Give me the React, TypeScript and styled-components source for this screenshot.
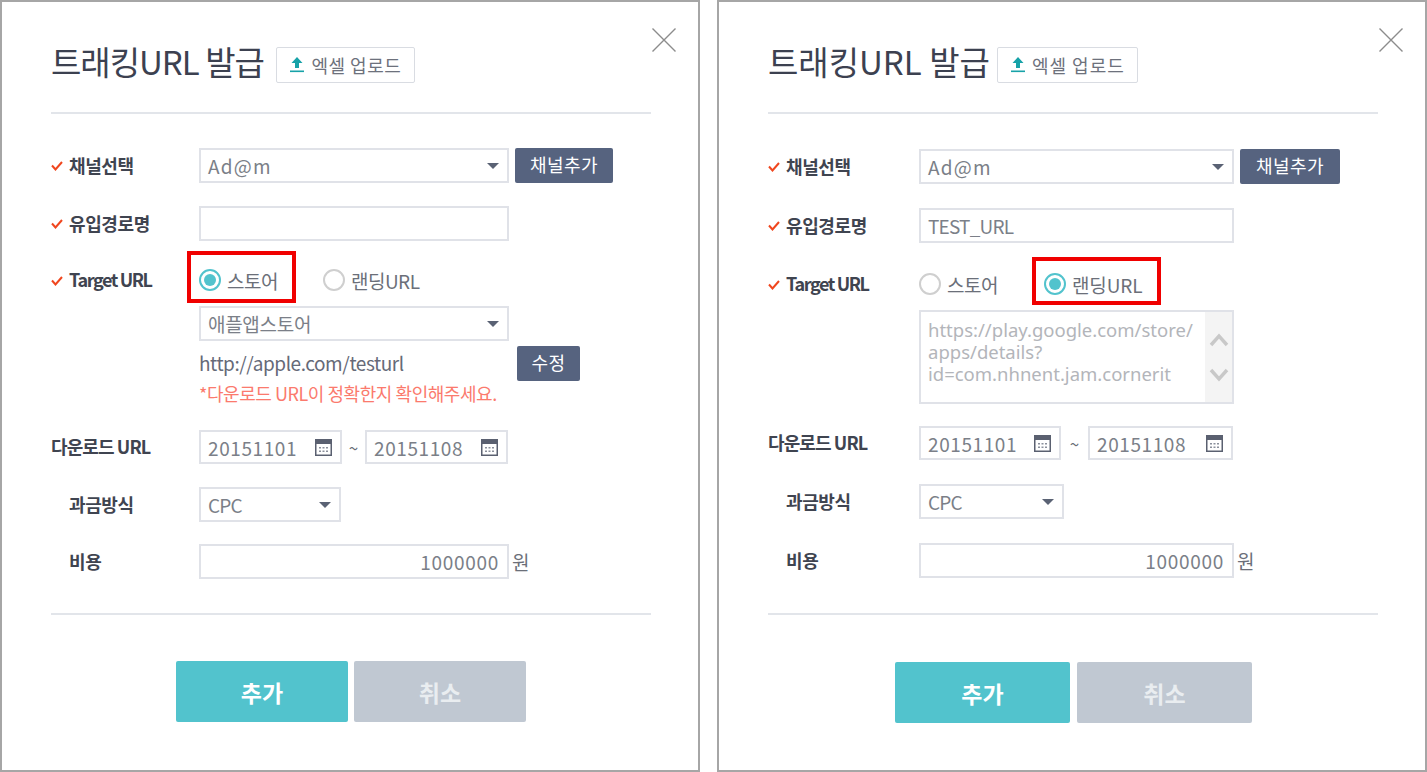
import React from "react";
import styled, { createGlobalStyle } from "styled-components";

const GlobalStyle = createGlobalStyle`
  html, body {
    margin: 0;
    padding: 0;
    background: #fff;
    font-family: "Noto Sans CJK KR", "Noto Sans", sans-serif;
  }
  * { box-sizing: border-box; }
`;

const Page = styled.div`
  width: 1427px;
  height: 772px;
  display: flex;
  justify-content: space-between;
  overflow: hidden;
`;

const Panel = styled.section<{ $width: number }>`
  position: relative;
  width: ${(p) => p.$width}px;
  height: 772px;
  border: 2px solid #a6a6a6;
  padding: 45px 0 0 49px;
`;

const CloseButton = styled.div<{ $right: number }>`
  position: absolute;
  top: 26px;
  right: ${(p) => p.$right}px;
  width: 24px;
  height: 24px;
  color: #8c8c8c;
`;

const Header = styled.div`
  display: flex;
  align-items: center;
  height: 35px;
`;

const Title = styled.h1<{ $track: number }>`
  margin: -6px 0 0;
  font-size: 33px;
  font-weight: 400;
  letter-spacing: ${(p) => p.$track}px;
  color: #3c4150;
  line-height: 35px;
`;

const UploadButton = styled.div<{ $left: number; $width: number; $track: number }>`
  margin-left: ${(p) => p.$left}px;
  width: ${(p) => p.$width}px;
  height: 36px;
  border: 1px solid #d9dce2;
  border-radius: 2px;
  display: flex;
  align-items: center;
  justify-content: center;
  gap: 6px;
  font-size: 18px;
  letter-spacing: ${(p) => p.$track}px;
  color: #6d717c;
`;

const Divider = styled.hr<{ $top: number; $width: number }>`
  margin: ${(p) => p.$top}px 0 0;
  width: ${(p) => p.$width}px;
  height: 2px;
  border: 0;
  background: #e2e5ea;
`;

const Row = styled.div<{ $top: number; $align?: string }>`
  display: flex;
  align-items: ${(p) => p.$align || "center"};
  margin-top: ${(p) => p.$top}px;
`;

const Label = styled.div<{ $width: number; $plain?: boolean; $track?: number }>`
  width: ${(p) => p.$width}px;
  flex: none;
  display: flex;
  align-items: center;
  gap: 6px;
  padding-left: ${(p) => (p.$plain ? "18px" : "0")};
  padding-bottom: 2px;
  font-size: 18px;
  font-weight: 700;
  letter-spacing: ${(p) => p.$track ?? -0.4}px;
  color: #3f4450;
`;

const Check = styled.svg`
  width: 12px;
  height: 10px;
  flex: none;
  margin-top: 3px;
  fill: none;
  stroke: #f0461e;
  stroke-width: 2;
`;

const Box = styled.div<{ $width: number; $height?: number; $right?: boolean; $track?: number }>`
  width: ${(p) => p.$width}px;
  height: ${(p) => p.$height || 35}px;
  flex: none;
  border: 2px solid #e0e2e8;
  display: flex;
  align-items: center;
  justify-content: ${(p) => (p.$right ? "flex-end" : "space-between")};
  padding: 0 8px 0 7px;
  font-size: 19px;
  letter-spacing: ${(p) => p.$track ?? -0.3}px;
  color: #7b7f88;
  background: #fff;
`;

const Caret = styled.span`
  width: 0;
  height: 0;
  border-left: 6px solid transparent;
  border-right: 6px solid transparent;
  border-top: 6px solid #5a6274;
`;

const DarkButton = styled.div<{ $width: number; $left: number }>`
  width: ${(p) => p.$width}px;
  height: 35px;
  margin-left: ${(p) => p.$left}px;
  padding-bottom: 3px;
  flex: none;
  background: #56637f;
  border-radius: 2px;
  display: flex;
  align-items: center;
  justify-content: center;
  color: #fff;
  font-size: 18px;
  letter-spacing: 0.5px;
`;

const Column = styled.div`
  display: flex;
  flex-direction: column;
`;

const RadioGroup = styled.div<{ $gap: number }>`
  display: flex;
  align-items: center;
  gap: ${(p) => p.$gap}px;
`;

const RadioOption = styled.div<{ $marked?: boolean; $up?: number; $down?: number; $track?: number }>`
  position: relative;
  display: flex;
  align-items: center;
  gap: 6px;
  font-size: 19px;
  letter-spacing: ${(p) => p.$track ?? -0.5}px;
  color: #6b6f79;
  &::after {
    content: "";
    display: ${(p) => (p.$marked ? "block" : "none")};
    position: absolute;
    top: -${(p) => p.$up || 14}px;
    bottom: -${(p) => p.$down || 7}px;
    left: -12px;
    right: -18px;
    border: 4px solid #f00000;
  }
`;

const RadioDot = styled.span<{ $on?: boolean }>`
  width: 22px;
  height: 22px;
  flex: none;
  border-radius: 50%;
  border: 2px solid ${(p) => (p.$on ? "#52c3cd" : "#cfcfcf")};
  padding: 3px;
  background-clip: content-box;
  background-color: ${(p) => (p.$on ? "#52c3cd" : "#fff")};
`;

const UrlRow = styled.div<{ $top: number }>`
  display: flex;
  align-items: center;
  margin-top: ${(p) => p.$top}px;
`;

const UrlText = styled.div`
  width: 318px;
  padding-bottom: 2px;
  font-size: 19px;
  letter-spacing: -0.45px;
  color: #666a78;
`;

const Warning = styled.div`
  font-size: 18px;
  line-height: 25px;
  letter-spacing: -0.45px;
  color: #fb7a6d;
`;

const TextArea = styled.div<{ $width: number; $height: number; $top: number }>`
  width: ${(p) => p.$width}px;
  height: ${(p) => p.$height}px;
  margin-top: ${(p) => p.$top}px;
  border: 2px solid #e0e2e8;
  display: flex;
  justify-content: space-between;
`;

const AreaText = styled.div`
  padding: 7px 0 0 7px;
  font-size: 18.5px;
  line-height: 22px;
  color: #b3b5ba;
  font-family: "Noto Sans", sans-serif;
`;

const ScrollTrack = styled.div`
  width: 27px;
  flex: none;
  background: #f4f4f4;
  color: #c8c8c8;
  display: flex;
  flex-direction: column;
  align-items: center;
  gap: 21px;
  padding-top: 21px;
`;

const Tilde = styled.span<{ $width: number }>`
  width: ${(p) => p.$width}px;
  text-align: center;
  font-size: 17px;
  color: #6b6f79;
  flex: none;
`;

const Won = styled.span`
  margin-left: 3px;
  font-size: 19px;
  color: #6b6f79;
`;

const Actions = styled.div<{ $left: number; $gap: number; $top: number }>`
  display: flex;
  gap: ${(p) => p.$gap}px;
  margin: ${(p) => p.$top}px 0 0 ${(p) => p.$left}px;
`;

const ActionButton = styled.div<{ $width: number; $muted?: boolean }>`
  width: ${(p) => p.$width}px;
  height: 61px;
  border-radius: 2px;
  display: flex;
  align-items: center;
  justify-content: center;
  background: ${(p) => (p.$muted ? "#c0c8d2" : "#52c3cd")};
  color: ${(p) => (p.$muted ? "#e9edf0" : "#fff")};
  font-size: 23px;
  font-weight: 700;
`;

function CloseIcon() {
  return (
    <svg width="24" height="24" viewBox="0 0 24 24" fill="none" stroke="currentColor" strokeWidth="1.4">
      <path d="M0.5 0.5 L23.5 23.5 M23.5 0.5 L0.5 23.5" />
    </svg>
  );
}

function UploadIcon() {
  return (
    <svg width="16" height="17" viewBox="0 0 16 17">
      <path d="M8 1 L13.5 7 H10 V12 H6 V7 H2.5 Z" fill="#17a2a8" />
      <rect x="1" y="14.5" width="14" height="1.6" fill="#17a2a8" />
    </svg>
  );
}

function CheckMark() {
  return (
    <Check viewBox="0 0 12 10">
      <path d="M1 4.5 L4.5 8.5 L11 1" />
    </Check>
  );
}

function CalendarIcon() {
  return (
    <svg width="17" height="17" viewBox="0 0 17 17">
      <rect x="0.75" y="0.75" width="15.5" height="15.5" fill="#fff" stroke="#5a6070" strokeWidth="1.5" />
      <rect x="1" y="1" width="15" height="4" fill="#5a6070" />
      <path d="M4 8h2v1.5H4zM7.5 8h2v1.5h-2zM11 8h2v1.5h-2zM4 11.5h2V13H4zM7.5 11.5h2V13h-2zM11 11.5h2V13h-2z" fill="#8a8f9b" />
    </svg>
  );
}

function Chevron({ up }: { up?: boolean }) {
  return (
    <svg width="20" height="14" viewBox="0 0 20 14" fill="none" stroke="currentColor" strokeWidth="3.4">
      <path d={up ? "M2 12 L10 3 L18 12" : "M2 2 L10 11 L18 2"} />
    </svg>
  );
}

function DateField({ width, value }: { width: number; value: string }) {
  return (
    <Box $width={width} $height={34} $track={0.6}>
      {value}
      <CalendarIcon />
    </Box>
  );
}

function LeftPanel() {
  return (
    <Panel $width={700}>
      <CloseButton $right={22}>
        <CloseIcon />
      </CloseButton>
      <Header>
        <Title $track={-1}>트래킹URL 발급</Title>
        <UploadButton $left={12} $width={139} $track={0.5}>
          <UploadIcon />
          엑셀 업로드
        </UploadButton>
      </Header>
      <Divider $top={30} $width={600} />
      <Row $top={34}>
        <Label $width={148}>
          <CheckMark />
          채널선택
        </Label>
        <Box $width={310} $track={1.2}>
          Ad@m
          <Caret />
        </Box>
        <DarkButton $width={98} $left={6}>
          채널추가
        </DarkButton>
      </Row>
      <Row $top={23}>
        <Label $width={148}>
          <CheckMark />
          유입경로명
        </Label>
        <Box $width={310} />
      </Row>
      <Row $top={25}>
        <Label $width={148} $track={-1.4}>
          <CheckMark />
          Target URL
        </Label>
        <RadioGroup $gap={45}>
          <RadioOption $marked $up={16} $down={9}>
            <RadioDot $on />
            스토어
          </RadioOption>
          <RadioOption>
            <RadioDot />
            랜딩URL
          </RadioOption>
        </RadioGroup>
      </Row>
      <Row $top={12} $align="flex-start">
        <Label $width={148} />
        <Column>
          <Box $width={310}>
            애플앱스토어
            <Caret />
          </Box>
          <UrlRow $top={5}>
            <UrlText>http://apple.com/testurl</UrlText>
            <DarkButton $width={63} $left={0}>
              수정
            </DarkButton>
          </UrlRow>
          <Warning>*다운로드 URL이 정확한지 확인해주세요.</Warning>
        </Column>
      </Row>
      <Row $top={24}>
        <Label $width={148} $track={-0.9}>
          다운로드 URL
        </Label>
        <DateField width={143} value="20151101" />
        <Tilde $width={23}>~</Tilde>
        <DateField width={143} value="20151108" />
      </Row>
      <Row $top={23}>
        <Label $width={148} $plain>
          과금방식
        </Label>
        <Box $width={142} $track={-0.8}>
          CPC
          <Caret />
        </Box>
      </Row>
      <Row $top={22}>
        <Label $width={148} $plain>
          비용
        </Label>
        <Box $width={310} $right $track={0.7}>
          1000000
        </Box>
        <Won>원</Won>
      </Row>
      <Divider $top={34} $width={600} />
      <Actions $left={125} $gap={6} $top={46}>
        <ActionButton $width={172}>추가</ActionButton>
        <ActionButton $width={172} $muted>
          취소
        </ActionButton>
      </Actions>
    </Panel>
  );
}

function RightPanel() {
  return (
    <Panel $width={710}>
      <CloseButton $right={22}>
        <CloseIcon />
      </CloseButton>
      <Header>
        <Title $track={0}>트래킹URL 발급</Title>
        <UploadButton $left={7} $width={141} $track={1}>
          <UploadIcon />
          엑셀 업로드
        </UploadButton>
      </Header>
      <Divider $top={30} $width={610} />
      <Row $top={35}>
        <Label $width={151}>
          <CheckMark />
          채널선택
        </Label>
        <Box $width={315} $track={1.2}>
          Ad@m
          <Caret />
        </Box>
        <DarkButton $width={100} $left={6}>
          채널추가
        </DarkButton>
      </Row>
      <Row $top={24}>
        <Label $width={151}>
          <CheckMark />
          유입경로명
        </Label>
        <Box $width={315} $track={-0.8}>
          TEST_URL
        </Box>
      </Row>
      <Row $top={27}>
        <Label $width={151} $track={-1.4}>
          <CheckMark />
          Target URL
        </Label>
        <RadioGroup $gap={46}>
          <RadioOption>
            <RadioDot />
            스토어
          </RadioOption>
          <RadioOption $marked $track={-0.1}>
            <RadioDot $on />
            랜딩URL
          </RadioOption>
        </RadioGroup>
      </Row>
      <Row $top={0}>
        <Label $width={151} />
        <TextArea $width={315} $height={94} $top={12}>
          <AreaText>
            https://play.google.com/store/
            <br />
            apps/details?
            <br />
            id=com.nhnent.jam.cornerit
          </AreaText>
          <ScrollTrack>
            <Chevron up />
            <Chevron />
          </ScrollTrack>
        </TextArea>
      </Row>
      <Row $top={22}>
        <Label $width={151} $track={-0.9}>
          다운로드 URL
        </Label>
        <DateField width={142} value="20151101" />
        <Tilde $width={27}>~</Tilde>
        <DateField width={145} value="20151108" />
      </Row>
      <Row $top={24}>
        <Label $width={151} $plain>
          과금방식
        </Label>
        <Box $width={145} $track={-0.8}>
          CPC
          <Caret />
        </Box>
      </Row>
      <Row $top={24}>
        <Label $width={151} $plain>
          비용
        </Label>
        <Box $width={315} $right $track={0.7}>
          1000000
        </Box>
        <Won>원</Won>
      </Row>
      <Divider $top={35} $width={610} />
      <Actions $left={127} $gap={7} $top={47}>
        <ActionButton $width={175}>추가</ActionButton>
        <ActionButton $width={175} $muted>
          취소
        </ActionButton>
      </Actions>
    </Panel>
  );
}

export default function App() {
  return (
    <Page>
      <GlobalStyle />
      <LeftPanel />
      <RightPanel />
    </Page>
  );
}
